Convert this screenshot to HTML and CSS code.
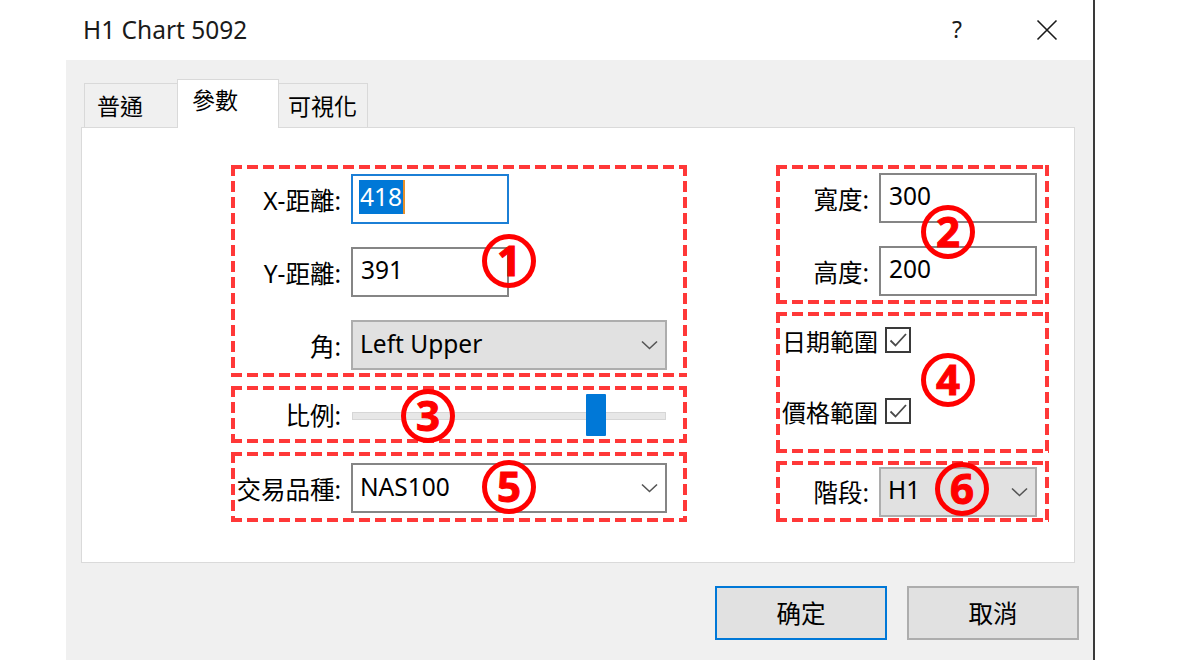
FILE: index.html
```html
<!DOCTYPE html>
<html lang="zh-Hant">
<head>
<meta charset="utf-8">
<title>H1 Chart 5092</title>
<link rel="stylesheet" href="styles.css">
</head>
<body>
<div class="window">
  <div class="titlebar">
    <span class="title">H1 Chart 5092</span>
    <span class="tbtn help">?</span>
    <span class="tbtn close">
      <svg width="22" height="22" viewBox="0 0 22 22"><path d="M1.5 1.5 L20.5 20.5 M20.5 1.5 L1.5 20.5" stroke="#1a1a1a" stroke-width="1.6" fill="none"/></svg>
    </span>
  </div>
  <div class="client">
    <div class="tabs">
      <div class="tab">普通</div>
      <div class="tab active">參數</div>
      <div class="tab">可視化</div>
    </div>
    <div class="panel">
      <div class="col col-left">
        <div class="box box1">
          <div class="row">
            <span class="lbl">X-距離:</span>
            <div class="edit focus"><span class="sel">418</span></div>
          </div>
          <div class="row">
            <span class="lbl">Y-距離:</span>
            <div class="edit"><span class="val">391</span></div>
          </div>
          <div class="row">
            <span class="lbl">角:</span>
            <div class="combo gray wide"><span class="val">Left Upper</span><span class="chev"><svg width="17" height="10" viewBox="0 0 17 10"><path d="M1 1.5 L8.5 8.5 L16 1.5" stroke="#555" stroke-width="1.6" fill="none"/></svg></span></div>
          </div>
        </div>
        <div class="box box3">
          <div class="row">
            <span class="lbl">比例:</span>
            <div class="slider"><div class="track"></div><div class="thumb"></div></div>
          </div>
        </div>
        <div class="box box5">
          <div class="row">
            <span class="lbl">交易品種:</span>
            <div class="combo white wide"><span class="val">NAS100</span><span class="chev"><svg width="17" height="10" viewBox="0 0 17 10"><path d="M1 1.5 L8.5 8.5 L16 1.5" stroke="#555" stroke-width="1.6" fill="none"/></svg></span></div>
          </div>
        </div>
      </div>
      <div class="col col-right">
        <div class="box box2">
          <div class="row">
            <span class="lbl">寬度:</span>
            <div class="edit"><span class="val">300</span></div>
          </div>
          <div class="row">
            <span class="lbl">高度:</span>
            <div class="edit"><span class="val">200</span></div>
          </div>
        </div>
        <div class="box box4">
          <div class="check-row"><span class="ctext">日期範圍</span><span class="cbox"><svg width="22" height="22" viewBox="0 0 22 22"><path d="M3.5 11.5 L8.5 16.5 L19 5" stroke="#4a4a4a" stroke-width="1.8" fill="none"/></svg></span></div>
          <div class="check-row"><span class="ctext">價格範圍</span><span class="cbox"><svg width="22" height="22" viewBox="0 0 22 22"><path d="M3.5 11.5 L8.5 16.5 L19 5" stroke="#4a4a4a" stroke-width="1.8" fill="none"/></svg></span></div>
        </div>
        <div class="box box6">
          <div class="row">
            <span class="lbl">階段:</span>
            <div class="combo gray"><span class="val">H1</span><span class="chev"><svg width="17" height="10" viewBox="0 0 17 10"><path d="M1 1.5 L8.5 8.5 L16 1.5" stroke="#555" stroke-width="1.6" fill="none"/></svg></span></div>
          </div>
        </div>
      </div>
      <div class="mark m1">1</div>
      <div class="mark m2">2</div>
      <div class="mark m3">3</div>
      <div class="mark m4">4</div>
      <div class="mark m5">5</div>
      <div class="mark m6">6</div>
    </div>
    <div class="buttons">
      <div class="btn default">确定</div>
      <div class="btn">取消</div>
    </div>
  </div>
</div>
</body>
</html>
```

FILE: styles.css
```css
* { box-sizing: border-box; }

html, body {
  margin: 0;
  padding: 0;
  background: #ffffff;
}

body {
  width: 1180px;
  height: 660px;
  overflow: hidden;
  font-family: "Noto Sans", "Noto Sans CJK TC", sans-serif;
  font-size: 24.5px;
  color: #000;
}

.window {
  width: 1095px;
  height: 660px;
  border-right: 2px solid #3a3a3a;
  display: flex;
  flex-direction: column;
}

.titlebar {
  height: 60px;
  display: flex;
  align-items: center;
  padding-left: 83px;
  padding-right: 1px;
  background: #fff;
}

.title {
  flex: 1;
  font-size: 24.5px;
  color: #1a1a1a;
  padding-bottom: 2px;
}

.tbtn {
  width: 90px;
  height: 60px;
  display: flex;
  align-items: center;
  justify-content: center;
}

.help {
  font-size: 23px;
  color: #1a1a1a;
  padding-bottom: 2px;
}

.client {
  margin-left: 66px;
  flex: 1;
  background: #f0f0f0;
  padding-top: 19px;
}

.tabs {
  height: 48px;
  display: flex;
  align-items: flex-end;
  padding-left: 18px;
}

.tab {
  height: 44px;
  border: 1px solid #d9d9d9;
  border-bottom: none;
  background: #f0f0f0;
  display: flex;
  align-items: center;
  font-size: 23px;
  padding-bottom: 2px;
}

.tab:nth-child(1) { width: 93px; border-right: none; padding-left: 12px; }
.tab:nth-child(3) { width: 89px; border-left: none; padding-left: 9px; }

.tab.active {
  width: 102px;
  height: 49px;
  margin-bottom: -1px;
  background: #fff;
  position: relative;
  z-index: 1;
  padding-left: 14px;
  padding-bottom: 10px;
}

.panel {
  position: relative;
  margin-left: 15px;
  width: 994px;
  height: 436px;
  background: #fff;
  border: 1px solid #dadada;
  display: flex;
  gap: 89px;
  padding: 37px 0 0 149px;
}

.col {
  display: flex;
  flex-direction: column;
}

.col-left { width: 456px; gap: 9px; }
.col-right { width: 273px; gap: 8px; }

.box {
  --r: #ff3838;
  background:
    repeating-linear-gradient(90deg, var(--r) 0 11px, transparent 11px 16px) left top / 100% 4px no-repeat,
    repeating-linear-gradient(90deg, var(--r) 0 11px, transparent 11px 16px) left bottom / 100% 4px no-repeat,
    repeating-linear-gradient(180deg, var(--r) 0 11px, transparent 11px 16px) left top / 4px 100% no-repeat,
    repeating-linear-gradient(180deg, var(--r) 0 11px, transparent 11px 16px) right top / 4px 100% no-repeat;
  display: flex;
  flex-direction: column;
}

.box1 { height: 212px; padding-top: 9px; gap: 23px; }
.box3 { height: 57px; justify-content: center; }
.box5 { height: 70px; justify-content: center; padding-top: 2px; }
.box2 { height: 139px; padding-top: 8px; gap: 23px; }
.box4 { height: 141px; padding: 15px 0 0 6px; gap: 45px; }
.box6 { height: 61px; justify-content: center; }

.row {
  display: flex;
  align-items: center;
  height: 50px;
}

.lbl {
  text-align: right;
  padding-right: 10px;
  white-space: nowrap;
}

.col-left .lbl { width: 120px; }
.col-right .lbl { width: 103px; }

.edit {
  width: 158px;
  height: 50px;
  border: 2px solid #858585;
  background: #fff;
  display: flex;
  align-items: center;
  padding: 0 0 6px 8px;
}

.edit.focus {
  border-color: #1b7fd6;
  padding-left: 6px;
  padding-bottom: 4px;
}

.sel {
  background: #0078d7;
  color: #fff;
  height: 34px;
  line-height: 34px;
  padding: 0 1px 0 1px;
  border-right: 2px solid #e8902a;
}

.combo {
  width: 158px;
  height: 50px;
  border: 2px solid #adadad;
  display: flex;
  align-items: center;
  padding: 0 7px 4px 7px;
}

.combo.wide { width: 316px; }
.combo.gray { background: #e1e1e1; }
.combo.white { background: #fff; border-color: #858585; }

.combo .val { flex: 1; }

.chev {
  display: flex;
  align-items: center;
  padding-top: 4px;
}

.slider {
  position: relative;
  width: 316px;
  height: 42px;
  margin-left: 1px;
}

.track {
  position: absolute;
  left: 0;
  right: 2px;
  top: 18px;
  height: 8px;
  background: #e7e7e7;
  border: 1px solid #d6d6d6;
}

.thumb {
  position: absolute;
  left: 234px;
  top: 0;
  width: 20px;
  height: 42px;
  background: #0078d7;
  border-radius: 1px;
}

.check-row {
  display: flex;
  align-items: center;
  height: 26px;
}

.ctext { margin-right: 7px; font-size: 24px; }

.cbox {
  width: 26px;
  height: 26px;
  border: 2px solid #3a3a3a;
  background: #fff;
  display: flex;
  align-items: center;
  justify-content: center;
}

.mark {
  position: absolute;
  width: 54px;
  height: 54px;
  border: 5px solid #ff0000;
  border-radius: 50%;
  color: #ff0000;
  font-family: "Noto Sans", sans-serif;
  font-weight: 700;
  font-size: 42px;
  line-height: 1;
  display: flex;
  align-items: center;
  justify-content: center;
  padding-bottom: 3px;
  -webkit-text-stroke: 1px #ff0000;
}

.m1 { left: 400px; top: 106px; }
.m2 { left: 839px; top: 77px; }
.m3 { left: 319px; top: 261px; }
.m4 { left: 839px; top: 225px; }
.m5 { left: 400px; top: 332px; }
.m6 { left: 853px; top: 334px; }

.buttons {
  display: flex;
  justify-content: flex-end;
  gap: 20px;
  padding-right: 14px;
  margin-top: 23px;
}

.btn {
  width: 172px;
  height: 54px;
  border: 2px solid #adadad;
  background: #e1e1e1;
  display: flex;
  align-items: center;
  justify-content: center;
  padding-bottom: 2px;
}

.btn.default {
  border-color: #0078d7;
}
```
